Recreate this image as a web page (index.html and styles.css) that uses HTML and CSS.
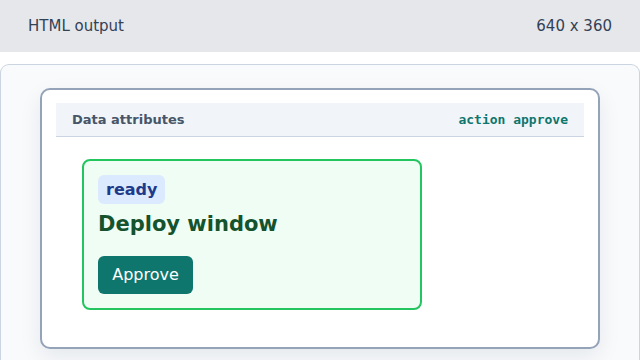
FILE: index.html
```html
<!DOCTYPE html>
<html lang="en">
<head>
<meta charset="utf-8">
<title>HTML output</title>
<link rel="stylesheet" href="styles.css">
</head>
<body>
<header class="topbar">
  <span class="topbar-title">HTML output</span>
  <span class="topbar-size">640 x 360</span>
</header>
<main class="stage">
  <section class="frame">
    <div class="frame-head">
      <span class="frame-title">Data attributes</span>
      <code class="frame-attr">action approve</code>
    </div>
    <div class="frame-body">
      <article class="card" data-state="ready" data-action="approve">
        <span class="badge">ready</span>
        <h2 class="card-title">Deploy window</h2>
        <button class="btn" type="button">Approve</button>
      </article>
    </div>
  </section>
</main>
</body>
</html>
```
FILE: styles.css
```css
* { box-sizing: border-box; }
html, body {
  margin: 0;
  padding: 0;
  width: 640px;
  height: 360px;
  overflow: hidden;
  background: #ffffff;
  font-family: "DejaVu Sans", sans-serif;
}
.topbar {
  height: 52px;
  background: #e5e7eb;
  display: flex;
  align-items: center;
  justify-content: space-between;
  padding: 0 28px;
  font-size: 15px;
  color: #334155;
}
.stage {
  margin-top: 12px;
  height: 296px;
  background: #f8fafc;
  border: 1px solid #cbd5e1;
  border-bottom: none;
  border-radius: 9px 9px 0 0;
  padding: 23px 39px 0 39px;
}
.frame {
  background: #ffffff;
  border: 2px solid #94a3b8;
  border-radius: 10px;
  padding: 13px 14px 0 14px;
  height: 261px;
  box-shadow: 0 8px 22px rgba(15, 23, 42, 0.08);
}
.frame-head {
  display: flex;
  justify-content: space-between;
  align-items: center;
  background: #f1f5f9;
  border-bottom: 1px solid #cbd5e1;
  height: 34px;
  padding: 0 16px;
}
.frame-title {
  font-size: 13px;
  font-weight: bold;
  color: #475569;
}
.frame-attr {
  font-family: "DejaVu Sans Mono", monospace;
  font-size: 13px;
  font-weight: bold;
  color: #0f766e;
}
.frame-body {
  padding: 22px 26px;
}
.card {
  width: 340px;
  height: 151px;
  background: #f0fdf4;
  border: 2px solid #22c55e;
  border-radius: 8px;
  padding: 14px 14px;
  display: flex;
  flex-direction: column;
  align-items: flex-start;
}
.badge {
  background: #dbeafe;
  color: #1e3a8a;
  font-weight: bold;
  font-size: 16px;
  line-height: 21px;
  padding: 4px 8px;
  border-radius: 6px;
}
.card-title {
  margin: 8px 0 20px 0;
  font-size: 21px;
  line-height: 24px;
  font-weight: bold;
  color: #14532d;
}
.btn {
  background: #0f766e;
  color: #ffffff;
  border: none;
  border-radius: 6px;
  font-family: "DejaVu Sans", sans-serif;
  font-size: 16px;
  line-height: 18px;
  padding: 10px 14px;
  height: 38px;
  width: 95px;
}
```
